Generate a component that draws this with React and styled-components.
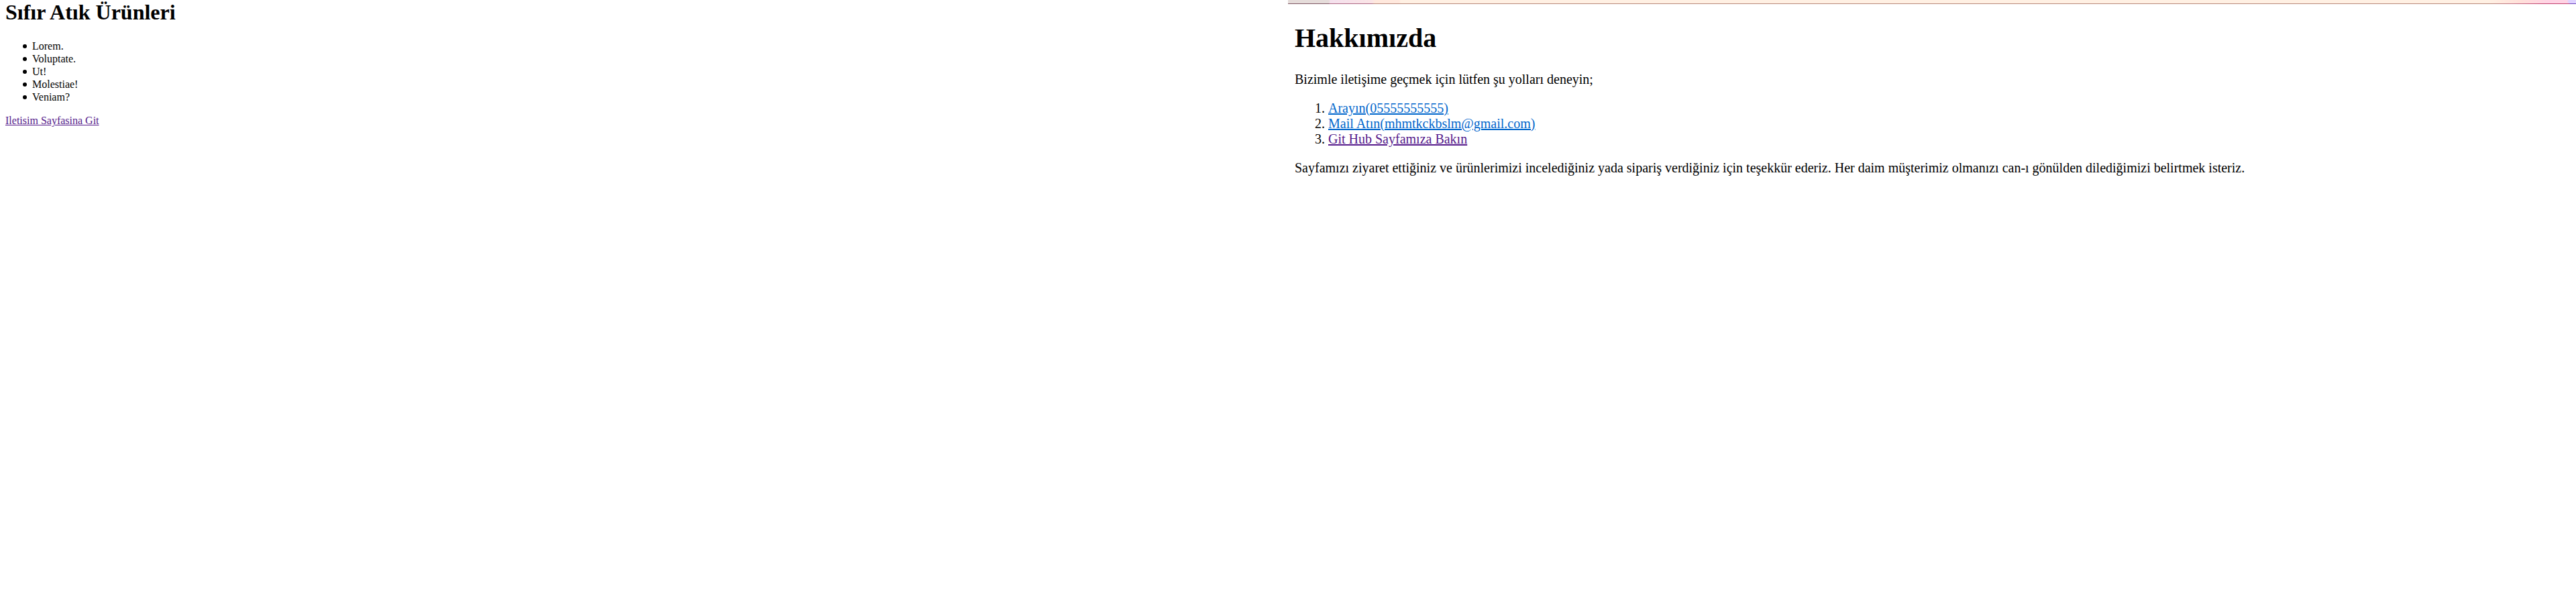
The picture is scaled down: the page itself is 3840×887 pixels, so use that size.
import React from "react";
import styled, { createGlobalStyle } from "styled-components";

const GlobalStyle = createGlobalStyle`
  body {
    margin: 0;
    background: #fff;
    color: #000;
    font-family: "Liberation Serif", "Times New Roman", serif;
  }
`;

const Screens = styled.div`
  display: grid;
  grid-template-columns: 1fr 1fr;
  min-height: 100vh;
`;

const Products = styled.main`
  padding: 0 8px;
  font-size: 16px;
  line-height: 19px;
`;

const About = styled.section`
  font-size: 20px;
  line-height: 23px;
`;

const AboutContent = styled.div`
  padding: 28px 10px 0;
`;

const ThemeStrip = styled.div`
  height: 5px;
  border-bottom: 1px solid;
  border-image: linear-gradient(
      90deg,
      #7c5562 0 62px,
      #ad6683 63px 125px,
      #b88879 130px calc(100% - 130px),
      #c47184 calc(100% - 95px),
      #c23d6c calc(100% - 50px) calc(100% - 11px),
      #683fbd calc(100% - 10px)
    )
    1;
  background: linear-gradient(
    90deg,
    #e5dcda 0 61px,
    #f4e0ed 63px,
    #fae4e6 125px,
    #ffe8dd 130px 166px,
    #fff0e3 168px calc(100% - 130px),
    #ffe0d9 calc(100% - 85px),
    #ffd3e4 calc(100% - 40px) calc(100% - 13px),
    #dfd3ff calc(100% - 11px)
  );
`;

const Title = styled.h1`
  margin: 0 0 ${(p) => (p.$large ? 27 : 22)}px;
  font-size: ${(p) => (p.$large ? 40 : 32)}px;
  line-height: ${(p) => (p.$large ? 46 : 37)}px;
  font-weight: 700;
`;

const BulletList = styled.ul`
  margin: 0 0 16px;
  padding-left: 26px;
  list-style: none;
`;

const BulletItem = styled.li`
  display: flex;
  align-items: center;
  gap: 8px;

  &::before {
    content: "";
    width: 6px;
    height: 6px;
    border-radius: 50%;
    background: #000;
  }
`;

const ContactList = styled.ol`
  margin: 0 0 20px;
  padding-left: 50px;
`;

const Paragraph = styled.p`
  margin: 0 0 20px;
`;

const Link = styled.a`
  color: ${(p) => (p.$visited ? "#551a8b" : "#0066cc")};
  text-decoration: underline;
`;

const products = ["Lorem.", "Voluptate.", "Ut!", "Molestiae!", "Veniam?"];

const contacts = [
  { label: "Arayın(05555555555)", href: "tel:05555555555" },
  { label: "Mail Atın(mhmtkckbslm@gmail.com)", href: "mailto:mhmtkckbslm@gmail.com" },
  { label: "Git Hub Sayfamıza Bakın", href: "#github", visited: true },
];

export default function App() {
  return (
    <>
      <GlobalStyle />
      <Screens>
        <Products>
          <Title>Sıfır Atık Ürünleri</Title>
          <BulletList>
            {products.map((name) => (
              <BulletItem key={name}>{name}</BulletItem>
            ))}
          </BulletList>
          <Link href="#iletisim" $visited>
            Iletisim Sayfasina Git
          </Link>
        </Products>
        <About id="iletisim">
          <ThemeStrip />
          <AboutContent>
            <Title $large>Hakkımızda</Title>
            <Paragraph>Bizimle iletişime geçmek için lütfen şu yolları deneyin;</Paragraph>
            <ContactList>
              {contacts.map((c) => (
                <li key={c.href}>
                  <Link href={c.href} $visited={c.visited}>
                    {c.label}
                  </Link>
                </li>
              ))}
            </ContactList>
            <Paragraph>
              Sayfamızı ziyaret ettiğiniz ve ürünlerimizi incelediğiniz yada sipariş verdiğiniz için
              teşekkür ederiz. Her daim müşterimiz olmanızı can-ı gönülden dilediğimizi belirtmek
              isteriz.
            </Paragraph>
          </AboutContent>
        </About>
      </Screens>
    </>
  );
}
